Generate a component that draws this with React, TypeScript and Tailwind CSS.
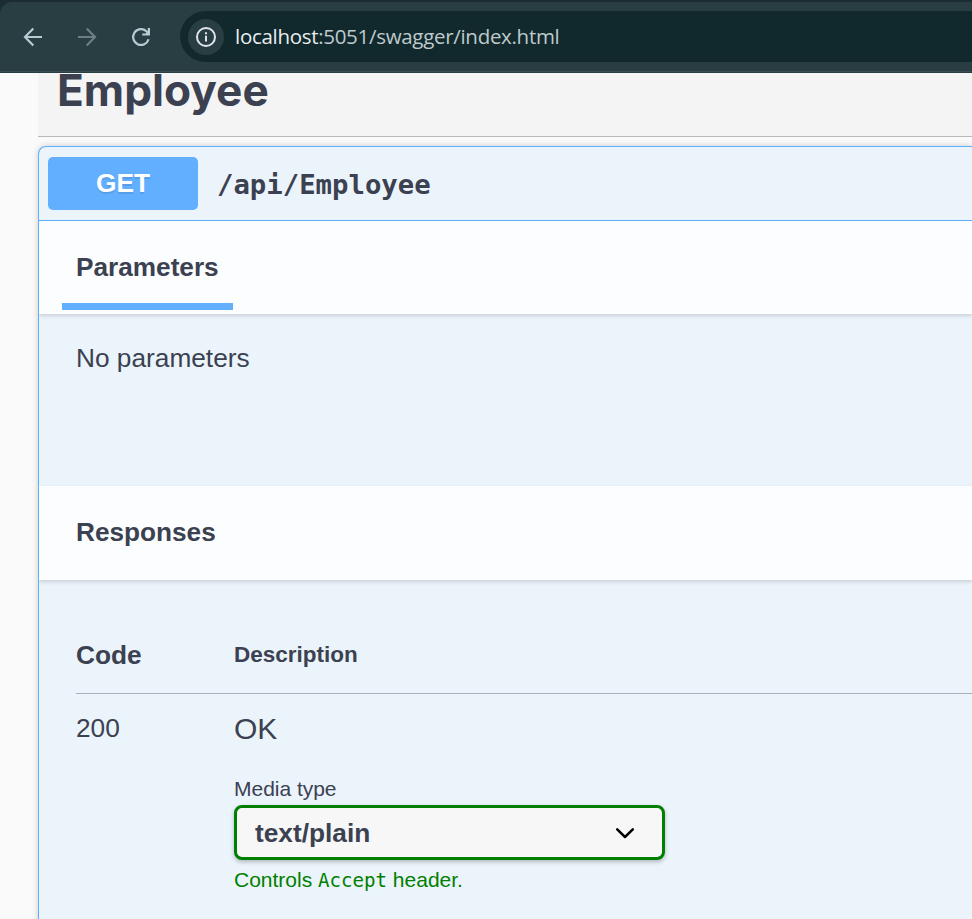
function BackIcon() {
  return (
    <svg width="20" height="20" viewBox="0 0 20 20" fill="none" stroke="#b4cdd3" strokeWidth="2.2">
      <path d="M19 10H2.5M10.3 1.6L2 10l8.3 8.4" />
    </svg>
  );
}

function ForwardIcon() {
  return (
    <svg width="20" height="20" viewBox="0 0 20 20" fill="none" stroke="#6c7f83" strokeWidth="2.2">
      <path d="M1 10h16.5M9.7 1.6L18 10l-8.3 8.4" />
    </svg>
  );
}

function ReloadIcon() {
  return (
    <svg width="20" height="20" viewBox="0 0 20 20" fill="none">
      <path d="M17.6 12.2A7.9 7.9 0 1 1 15.4 4.2L17 5.8" stroke="#b4cdd3" strokeWidth="2.2" />
      <path d="M19 1v7.6h-7.8V6.4h3.4l2.2-2.2V1z" fill="#b4cdd3" />
    </svg>
  );
}

function InfoIcon() {
  return (
    <svg width="20" height="20" viewBox="0 0 20 20" fill="none" stroke="#e0e6e8" strokeWidth="2">
      <circle cx="10" cy="10" r="9" />
      <path d="M10 8.8v5.8M10 5.2v2" />
    </svg>
  );
}

function BrowserBar() {
  return (
    <header className="h-[73px] shrink-0 bg-[#1c2d32] pt-[2px]">
      <div className="flex h-[71px] rounded-tl-[12px] bg-[#283e43] pl-[23px] pt-[9px] shadow-[inset_0_-1px_0_#283e43,inset_0_-2px_0_#3c4c52]">
        <div className="flex h-[51px] w-[157px] items-center gap-[34px] pt-[1px]">
          <BackIcon />
          <ForwardIcon />
          <ReloadIcon />
        </div>
        <div className="flex h-[51px] flex-1 items-center rounded-l-full bg-[#11292d] pl-[8px]">
          <span className="flex size-[36px] items-center justify-center rounded-full bg-[#283e43]">
            <InfoIcon />
          </span>
          <span className="ml-[11px] whitespace-nowrap font-['Open_Sans','Noto_Sans',sans-serif] text-[20.5px] leading-[51px] tracking-[-0.3px] text-[#bfc9cc]">
            <span className="text-[#e8edee]">localhost</span>:5051/swagger/index.html
          </span>
        </div>
      </div>
    </header>
  );
}

function SectionHeader({ title, active = false }: { title: string; active?: boolean }) {
  return (
    <div
      className={
        active
          ? "h-[93px] bg-[#fcfdfe] pl-[23px] shadow-[0_2px_4px_rgba(0,0,0,0.14)]"
          : "h-[94px] bg-[#fcfdfe] pl-[23px] shadow-[0_2px_4px_rgba(0,0,0,0.14)]"
      }
    >
      <div
        className={
          active
            ? "h-[89px] w-[171px] border-b-[7px] border-[#61affe] pl-[14px]"
            : "h-[89px] w-[171px] pl-[14px]"
        }
      >
        <h4 className="text-[26.2px] font-bold leading-[92px]">{title}</h4>
      </div>
    </div>
  );
}

function Responses() {
  return (
    <div className="pl-[37px] pt-[37px]">
      <div className="flex h-[77px] border-b border-[#a8b0bb] text-[26.25px] font-bold leading-[76px]">
        <div className="w-[158px]">Code</div>
        <div className="text-[22.5px] leading-[75px]">Description</div>
      </div>
      <div className="flex">
        <div className="w-[158px] text-[26.25px] leading-[68px]">200</div>
        <div>
          <p className="text-[30px] leading-[69px]">OK</p>
          <p className="mt-[12px] text-[21px] leading-[28px] tracking-[-0.02px]">Media type</p>
          <div className="mt-[2px] flex h-[55px] w-[431px] items-center justify-between rounded-[8px] border-[3px] border-[#008000] bg-[#f7f7f7] pl-[18px] pr-[27px] shadow-[0_2px_4px_rgba(0,0,0,0.25)]">
            <span className="text-[26.25px] font-bold leading-[48px]">text/plain</span>
            <svg width="20" height="12" viewBox="0 0 20 12" fill="none" stroke="#000" strokeWidth="2.5" strokeLinecap="round" strokeLinejoin="round">
              <path d="M2.2 2.3L10 10l7.8-7.7" />
            </svg>
          </div>
          <p className="mt-[6px] whitespace-nowrap text-[21px] leading-[28px] text-[#008000]">
            Controls <code className="font-['DejaVu_Sans_Mono',monospace] text-[19.1px]">Accept</code> header.
          </p>
        </div>
      </div>
    </div>
  );
}

export default function App() {
  return (
    <div className="flex h-[919px] w-[972px] flex-col overflow-hidden bg-[#fafafa] font-['Liberation_Sans',Arial,sans-serif] text-[#3b4151]">
      <BrowserBar />
      <main className="flex min-h-0 flex-1 flex-col overflow-hidden pl-[38px]">
        <div className="h-[64px] shrink-0 border-b border-[#b9b9b9] bg-[#f4f4f4] pl-[19px]">
          <h3 className="-mt-[13px] font-['Inter',sans-serif] text-[44.2px] font-bold leading-[60px]">Employee</h3>
        </div>
        <section className="mt-[9px] h-[800px] shrink-0 overflow-clip rounded-tl-[8px] border-l border-t border-[#61affe] bg-[#ebf3fb] shadow-[0_0_6px_rgba(0,0,0,0.19)]">
          <div className="flex h-[74px] items-center border-b border-[#61affe] pl-[9px]">
            <span className="h-[53px] w-[150px] rounded-[5px] bg-[#61affe] text-center text-[26.25px] font-bold leading-[52px] text-white [text-shadow:0_2px_0_rgba(0,0,0,0.1)]">
              GET
            </span>
            <span className="ml-[19px] mt-px font-['DejaVu_Sans_Mono',monospace] text-[27.3px] font-bold leading-[53px]">/api/Employee</span>
          </div>
          <SectionHeader title="Parameters" active />
          <p className="h-[172px] pl-[37px] pt-[29px] text-[26.25px] leading-[30px]">No parameters</p>
          <SectionHeader title="Responses" />
          <Responses />
        </section>
      </main>
    </div>
  );
}
